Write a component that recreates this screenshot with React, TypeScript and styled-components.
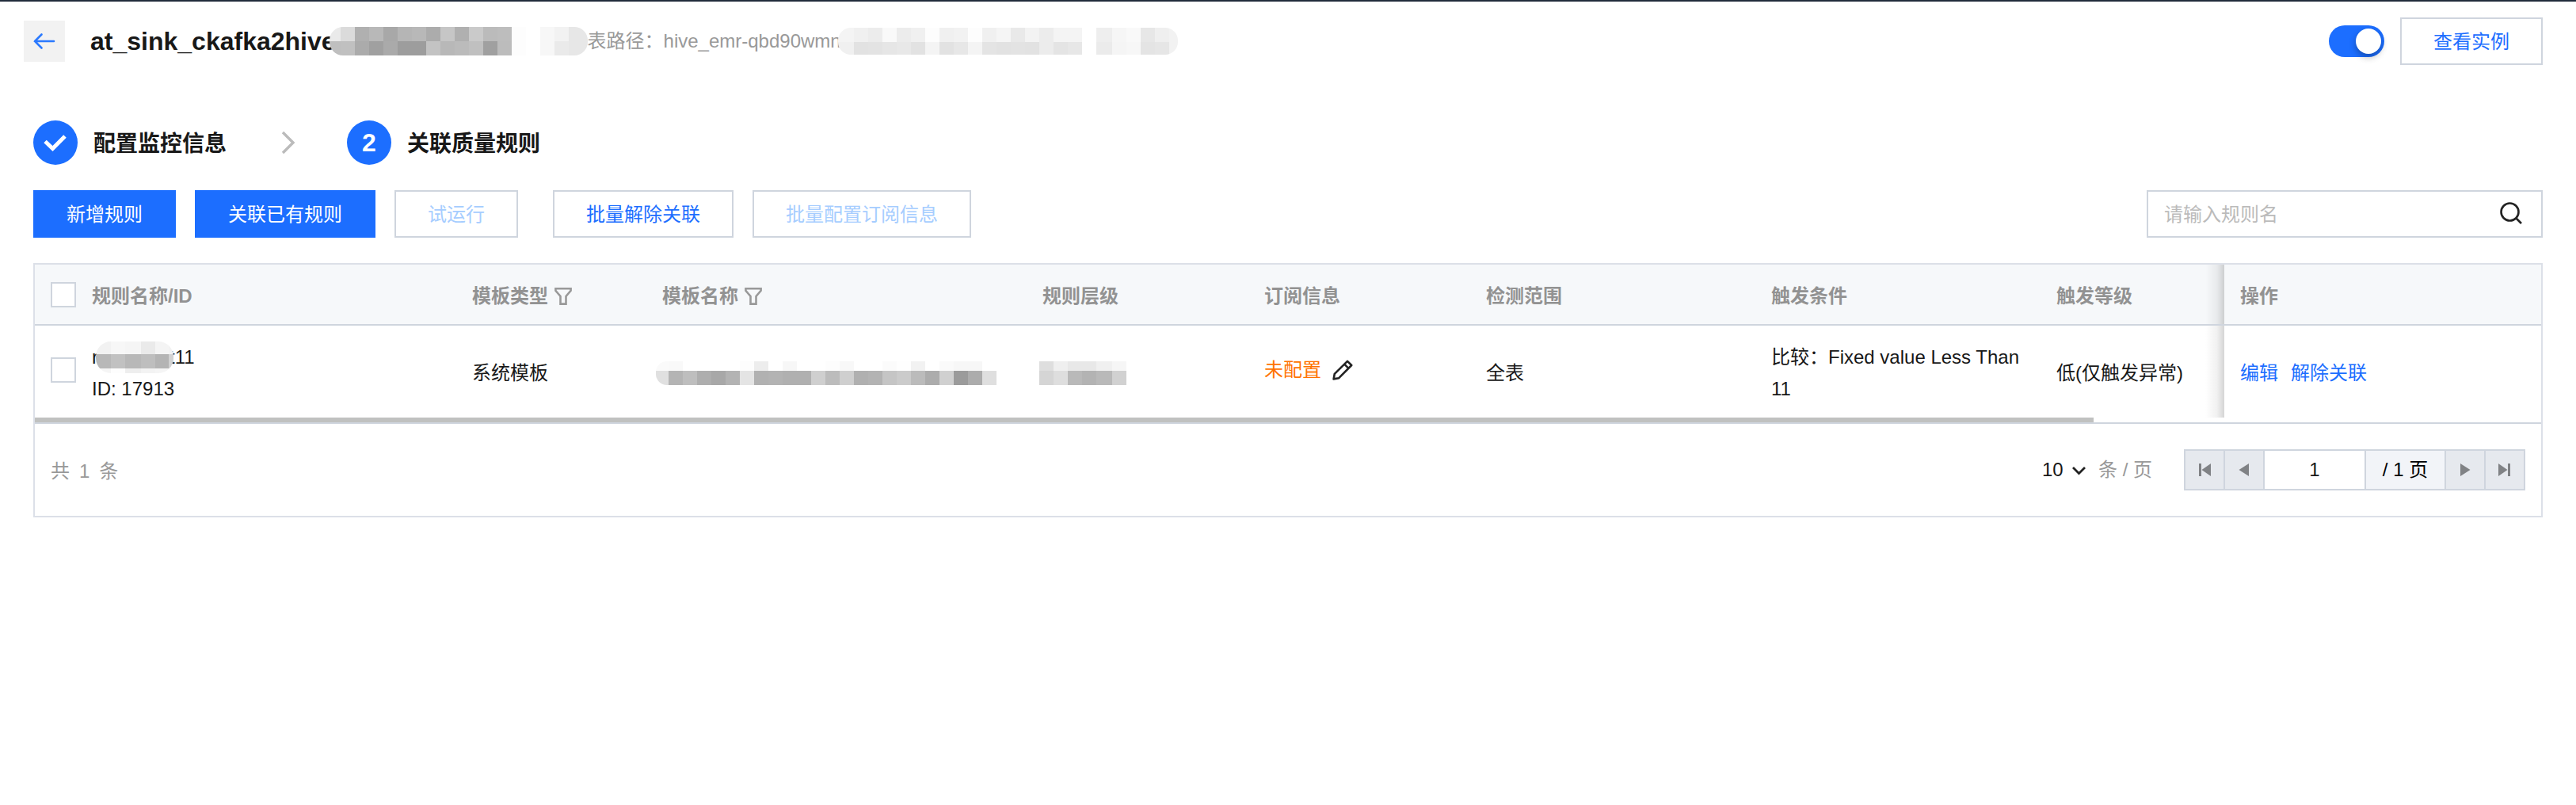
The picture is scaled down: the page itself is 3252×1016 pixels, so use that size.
import React, { useId, useState } from "react";
import styled, { createGlobalStyle, css } from "styled-components";

const color = {
  primary: "#1c6eff",
  primaryFaded: "#a6cdff",
  border: "#cfd5de",
  frame: "#dce0e8",
  text: "#181818",
  muted: "#929292",
  faint: "#999999",
  placeholder: "#bbbbbb",
  headBg: "#f6f8fa",
  warn: "#ff7200",
};

const GlobalStyle = createGlobalStyle`
  *, *::before, *::after { box-sizing: border-box; }
  body {
    margin: 0;
    background: #fff;
    color: ${color.text};
    font: 24px/40px "Liberation Sans", "Noto Sans CJK SC", sans-serif;
  }
  button, input, select { font: inherit; color: inherit; margin: 0; border-radius: 0; }
  svg { display: block; flex: none; }
`;

const Page = styled.main`
  border-top: 2px solid #212b3b;
`;

const TopBar = styled.header`
  display: flex;
  align-items: center;
  padding: 20px 42px 0 30px;
`;

const BackButton = styled.button`
  display: grid;
  place-items: center;
  flex: none;
  width: 52px;
  height: 52px;
  margin-right: 32px;
  padding: 0;
  border: 0;
  background: #f2f2f2;
  cursor: pointer;
`;

const Title = styled.h1`
  display: flex;
  align-items: center;
  margin: 0;
  font-size: 32px;
  font-weight: 700;
`;

const TablePath = styled.p`
  display: flex;
  align-items: center;
  margin: 0;
  color: ${color.faint};
`;

const TopActions = styled.div`
  display: flex;
  align-items: center;
  gap: 20px;
  margin-left: auto;
`;

const Switch = styled.input`
  appearance: none;
  width: 70px;
  height: 40px;
  padding: 4px;
  border-radius: 20px;
  background: ${color.border};
  cursor: pointer;

  &::before {
    content: "";
    display: block;
    width: 32px;
    height: 32px;
    border-radius: 50%;
    background: #fff;
    box-shadow: 0 4px 8px rgba(0, 0, 0, 0.3);
  }
  &:checked { background: ${color.primary}; }
  &:checked::before { margin-left: auto; }
`;

const Button = styled.button<{ $primary?: boolean }>`
  height: 60px;
  padding: 2px 40px 0;
  border: 2px solid ${color.border};
  background: #fff;
  color: ${color.primary};
  white-space: nowrap;
  cursor: pointer;

  ${(p) => p.$primary && css`
    border-color: ${color.primary};
    background: ${color.primary};
    color: #fff;
  `}
  &:disabled { color: ${color.primaryFaded}; cursor: default; }
`;

const Content = styled.section`
  padding: 70px 42px 0;
`;

const Steps = styled.ol`
  display: flex;
  align-items: center;
  gap: 65px;
  margin: 0 0 32px;
  padding: 0;
  list-style: none;
`;

const Step = styled.li`
  display: flex;
  align-items: center;
  gap: 20px;
  font-size: 28px;
  font-weight: 700;
`;

const StepLabel = styled.span`
  padding-top: 4px;
`;

const StepMark = styled.span`
  display: grid;
  place-items: center;
  width: 56px;
  height: 56px;
  border-radius: 50%;
  background: ${color.primary};
  color: #fff;
  font-size: 32px;
`;

const Toolbar = styled.div`
  display: flex;
  align-items: center;
  justify-content: space-between;
  margin-bottom: 32px;
`;

const ButtonGroups = styled.div`
  display: flex;
  gap: 44px;
`;

const ButtonGroup = styled.div`
  display: flex;
  gap: 24px;
`;

const SearchBox = styled.label`
  display: flex;
  align-items: center;
  width: 500px;
  height: 60px;
  padding: 0 22px 0 20px;
  border: 2px solid ${color.border};
`;

const SearchInput = styled.input`
  flex: 1;
  min-width: 0;
  padding: 2px 0 0;
  border: 0;
  outline: 0;
  background: none;
  &::placeholder { color: ${color.placeholder}; }
`;

const Frame = styled.div`
  border: 2px solid ${color.frame};
`;

const Table = styled.table`
  width: 100%;
  table-layout: fixed;
  border-collapse: separate;
  border-spacing: 0;
`;

const Col = styled.col<{ $width?: number }>`
  width: ${(p) => (p.$width ? p.$width + "px" : "auto")};
`;

const edgeShadow = "linear-gradient(to left, rgba(0,0,0,.17), rgba(0,0,0,.06) 9px, transparent 24px)";

const HeadCell = styled.th<{ $edge?: boolean; $tick?: boolean }>`
  height: 77px;
  padding: ${(p) => (p.$tick ? 0 : 4)}px 20px 0;
  border-bottom: 2px solid ${color.border};
  background: ${(p) => (p.$edge ? edgeShadow + ", " : "")}${color.headBg};
  color: ${color.muted};
  text-align: left;
  font-weight: 700;
`;

const Cell = styled.td<{ $edge?: boolean; $raised?: boolean }>`
  height: 115px;
  padding: ${(p) => (p.$raised ? "16px 20px 20px" : "20px 20px 16px")};
  background: ${(p) => (p.$edge ? edgeShadow : "none")};
  vertical-align: middle;
`;

const Checkbox = styled.input`
  appearance: none;
  display: block;
  width: 32px;
  height: 32px;
  border: 2px solid ${color.border};
  background: #fff;
  cursor: pointer;
  &:checked { border-color: ${color.primary}; background: ${color.primary}; }
`;

const Inline = styled.div<{ $gap?: number }>`
  display: flex;
  align-items: center;
  gap: ${(p) => p.$gap ?? 0}px;
`;

const IconButton = styled.button`
  padding: 0;
  border: 0;
  background: none;
  cursor: pointer;
`;

const Unset = styled.span`
  color: ${color.warn};
`;

const Link = styled.a`
  color: ${color.primary};
  text-decoration: none;
`;

const ScrollTrack = styled.div`
  height: 8px;
  border-bottom: 2px solid ${color.border};
`;

const ScrollThumb = styled.div`
  width: 82.15%;
  height: 6px;
  background: #c0c1c0;
`;

const Footer = styled.footer`
  display: flex;
  align-items: center;
  justify-content: space-between;
  padding: 32px 20px;
  color: ${color.faint};
`;

const Total = styled.div`
  display: flex;
  gap: 12px;
  padding-top: 4px;
`;

const SizePicker = styled.label`
  display: flex;
  align-items: center;
  margin-right: 40px;
`;

const SelectWrap = styled.span`
  display: grid;
  align-items: center;
  justify-items: end;
  margin-right: 14px;
  > * { grid-area: 1 / 1; }
  > svg { pointer-events: none; }
`;

const SizeSelect = styled.select`
  appearance: none;
  height: 40px;
  padding: 0 30px 0 0;
  border: 0;
  background: none;
  color: ${color.text};
`;

const Pager = styled.div`
  display: flex;
  > * + * { margin-left: -2px; }
`;

const PagerButton = styled.button`
  display: grid;
  place-items: center;
  width: 52px;
  height: 52px;
  padding: 0;
  border: 2px solid ${color.border};
  background: #e6e9ee;
`;

const PageInput = styled.input`
  width: 130px;
  height: 52px;
  padding: 0;
  border: 2px solid ${color.border};
  background: #fff;
  color: ${color.text};
  text-align: center;
`;

const PageTotal = styled.span`
  min-width: 103px;
  height: 52px;
  padding: 0 20px;
  border: 2px solid ${color.border};
  background: #f2f4f8;
  color: #000;
  line-height: 48px;
  text-align: center;
  white-space: nowrap;
`;

const MosaicBox = styled.span<{ $before?: number; $after?: number }>`
  position: relative;
  display: block;
  flex: none;
  margin-left: ${(p) => -(p.$before ?? 0)}px;
  margin-right: ${(p) => -(p.$after ?? 0)}px;
`;

type MosaicProps = {
  stops: number[];
  rows: { height: number; tones: string }[];
  radiusLeft?: number;
  radiusRight?: number;
  before?: number;
  after?: number;
};

/* Redaction strip: each two-digit hex in `tones` is the grey of one tile. */
function Mosaic({ stops, rows, radiusLeft = 0, radiusRight = 0, before, after }: MosaicProps) {
  const id = useId();
  const width = stops[stops.length - 1];
  const height = rows.reduce((sum, row) => sum + row.height, 0);
  const l = radiusLeft;
  const r = radiusRight;
  let y = 0;
  return (
    <MosaicBox $before={before} $after={after}>
      <svg width={width} height={height} shapeRendering="crispEdges" aria-hidden="true">
        <clipPath id={id}>
          <path
            d={`M${l} 0H${width - r}A${r} ${r} 0 0 1 ${width} ${r}V${height - r}A${r} ${r} 0 0 1 ${width - r} ${height}H${l}A${l} ${l} 0 0 1 0 ${height - l}V${l}A${l} ${l} 0 0 1 ${l} 0Z`}
          />
        </clipPath>
        <g clipPath={`url(#${id})`}>
          {rows.map((row, ri) => {
            const top = y;
            y += row.height;
            return row.tones.split(" ").map((tone, i) => (
              <rect
                key={ri + "-" + i}
                x={stops[i]}
                y={top}
                width={stops[i + 1] - stops[i]}
                height={row.height}
                fill={`#${tone}${tone}${tone}`}
              />
            ));
          })}
        </g>
      </svg>
    </MosaicBox>
  );
}

/* Tile edges: a first tile of its own width, then equal ones, then any listed extras. */
const tiles = (first: number, count: number, extras: number[] = []) => [
  0,
  ...Array.from({ length: count + 1 }, (_, i) => first + i * 18),
  ...extras,
];

const FilterIcon = () => (
  <svg width="22" height="24" viewBox="0 0 22 24" fill="none" stroke="#999" strokeWidth="2.6">
    <path d="M1.4 2.2h19.2v2.6L14.5 12v9.6h-7V12L1.4 4.8z" />
  </svg>
);

const PencilIcon = () => (
  <svg width="26" height="26" viewBox="0 0 26 26" fill="none" stroke="#222" strokeWidth="2.6" strokeLinejoin="round">
    <path d="M1.6 24.4l1.2-6.6L19 1.8l5.2 5.2L8.2 23.2zM15.2 5.6l5.2 5.2" />
  </svg>
);

const pagerShapes = {
  first: "M3 2h3v16H3zM18 2v16L6.500 10z",
  prev: "M16 2v16L3.500 10z",
  next: "M4 2v16l12.500-8z",
  last: "M2 2v16l11.500-8zM14 2h3v16h-3z",
};

function PagerIcon({ shape }: { shape: keyof typeof pagerShapes }) {
  return (
    <svg width="20" height="20" viewBox="0 0 20 20" fill="#808285">
      <path d={pagerShapes[shape]} />
    </svg>
  );
}

export default function App() {
  const [enabled, setEnabled] = useState(true);
  const [page, setPage] = useState("1");

  return (
    <Page>
      <GlobalStyle />
      <TopBar>
        <BackButton aria-label="返回">
          <svg width="28" height="22" viewBox="0 0 28 22" fill="none" stroke="#2b7aff" strokeWidth="2.6" strokeLinecap="round">
            <path d="M2 11h24M10.500 2.500L2 11l8.500 8.500" />
          </svg>
        </BackButton>
        <Title>
          at_sink_ckafka2hive
          <Mosaic
            before={8}
            radiusLeft={17}
            radiusRight={17}
            stops={tiles(14, 16, [326])}
            rows={[
              { height: 18, tones: "ea db b0 b8 a8 b5 b8 ac c6 b0 ca bb bd fd ff f7 f2 e7" },
              { height: 18, tones: "bf c0 ab a0 aa 9d 9d c3 b8 bb c0 a0 bc fd ff f7 ea e7" },
            ]}
          />
        </Title>
        <TablePath>
          表路径：hive_emr-qbd90wmn
          <Mosaic
            before={4}
            radiusLeft={16}
            radiusRight={16}
            stops={tiles(20, 16, [326, 346, 364, 382, 400, 418, 429])}
            rows={[
              { height: 18, tones: "f4 f0 ec f9 ec f0 fd f0 f2 fd f0 f5 e9 f3 ec f4 f4 ff ee f6 f9 e7 ef f2" },
              { height: 16, tones: "f0 e2 e3 e6 e8 e2 f4 e2 e7 f4 e4 e2 e3 e2 ec e4 e7 ff eb f5 f7 e4 e6 f2" },
            ]}
          />
        </TablePath>
        <TopActions>
          <Switch
            type="checkbox"
            role="switch"
            aria-label="启用"
            checked={enabled}
            onChange={(e) => setEnabled(e.target.checked)}
          />
          <Button>查看实例</Button>
        </TopActions>
      </TopBar>

      <Content>
        <Steps>
          <Step>
            <StepMark>
              <svg width="30" height="24" viewBox="0 0 30 24" fill="none" stroke="#fff" strokeWidth="5">
                <path d="M2 10.500l9.500 9L27 4" />
              </svg>
            </StepMark>
            <StepLabel>配置监控信息</StepLabel>
          </Step>
          <li aria-hidden="true">
            <svg width="22" height="30" viewBox="0 0 22 30" fill="none" stroke="#bbb" strokeWidth="3.400">
              <path d="M6 2l13 13L6 28" />
            </svg>
          </li>
          <Step aria-current="step">
            <StepMark>2</StepMark>
            <StepLabel>关联质量规则</StepLabel>
          </Step>
        </Steps>

        <Toolbar>
          <ButtonGroups>
            <ButtonGroup>
              <Button $primary>新增规则</Button>
              <Button $primary>关联已有规则</Button>
              <Button disabled>试运行</Button>
            </ButtonGroup>
            <ButtonGroup>
              <Button>批量解除关联</Button>
              <Button disabled>批量配置订阅信息</Button>
            </ButtonGroup>
          </ButtonGroups>
          <SearchBox>
            <SearchInput type="text" placeholder="请输入规则名" aria-label="请输入规则名" />
            <svg width="30" height="30" viewBox="0 0 30 30" fill="none" stroke="#222" strokeWidth="2.600">
              <circle cx="12.500" cy="12.500" r="11" />
              <path d="M20 20l7 7" />
            </svg>
          </SearchBox>
        </Toolbar>

        <Frame>
          <Table>
            <colgroup>
              <Col $width={52} />
              <Col $width={480} />
              <Col $width={240} />
              <Col $width={480} />
              <Col $width={280} />
              <Col $width={280} />
              <Col $width={360} />
              <Col $width={360} />
              <Col />
              <Col $width={400} />
            </colgroup>
            <thead>
              <tr>
                <HeadCell $tick>
                  <Checkbox type="checkbox" aria-label="全选" />
                </HeadCell>
                <HeadCell>规则名称/ID</HeadCell>
                <HeadCell>
                  <Inline $gap={8}>
                    模板类型
                    <IconButton aria-label="筛选模板类型"><FilterIcon /></IconButton>
                  </Inline>
                </HeadCell>
                <HeadCell>
                  <Inline $gap={8}>
                    模板名称
                    <IconButton aria-label="筛选模板名称"><FilterIcon /></IconButton>
                  </Inline>
                </HeadCell>
                <HeadCell>规则层级</HeadCell>
                <HeadCell>订阅信息</HeadCell>
                <HeadCell>检测范围</HeadCell>
                <HeadCell>触发条件</HeadCell>
                <HeadCell $edge>触发等级</HeadCell>
                <HeadCell>操作</HeadCell>
              </tr>
            </thead>
            <tbody>
              <tr>
                <Cell $raised>
                  <Checkbox type="checkbox" aria-label="选择规则 17913" />
                </Cell>
                <Cell>
                  <Inline>
                    r
                    <Mosaic
                      before={3}
                      after={5}
                      radiusLeft={19}
                      radiusRight={19}
                      stops={[0, 19, 37, 57, 75, 92, 98]}
                      rows={[
                        { height: 16, tones: "f2 f7 f5 ea f4 f2" },
                        { height: 18, tones: "b8 c1 b8 be b4 d2" },
                        { height: 6, tones: "f5 fd ee f3 f5 f5" },
                      ]}
                    />
                    t11
                  </Inline>
                  <div>ID: 17913</div>
                </Cell>
                <Cell>系统模板</Cell>
                <Cell>
                  <Mosaic
                    before={8}
                    radiusLeft={14}
                    stops={tiles(16, 23)}
                    rows={[
                      { height: 12, tones: "fa f9 ff ff ff ff fd ed ff f7 ff ff fd f8 ff ff fb fe f2 ff fa f7 f7 ff" },
                      { height: 18, tones: "e0 b4 be ae a8 b3 e4 b1 b3 b0 b0 cf bc cf b0 b3 c5 cb bb ac d0 9b ac df" },
                    ]}
                  />
                </Cell>
                <Cell>
                  <Mosaic
                    before={4}
                    stops={[0, 18, 36, 54, 72, 92, 110]}
                    rows={[
                      { height: 12, tones: "de ef e8 e8 f0 f6" },
                      { height: 18, tones: "d5 de b9 b3 b9 d1" },
                    ]}
                  />
                </Cell>
                <Cell $raised>
                  <Inline $gap={14}>
                    <Unset>未配置</Unset>
                    <IconButton aria-label="编辑订阅信息"><PencilIcon /></IconButton>
                  </Inline>
                </Cell>
                <Cell>全表</Cell>
                <Cell>比较：Fixed value Less Than 11</Cell>
                <Cell $edge>低(仅触发异常)</Cell>
                <Cell>
                  <Inline $gap={16}>
                    <Link href="#edit">编辑</Link>
                    <Link href="#unlink">解除关联</Link>
                  </Inline>
                </Cell>
              </tr>
            </tbody>
          </Table>
          <ScrollTrack>
            <ScrollThumb />
          </ScrollTrack>

          <Footer>
            <Total>
              <span>共</span>
              <span>1</span>
              <span>条</span>
            </Total>
            <Inline>
              <SizePicker>
                <SelectWrap>
                  <SizeSelect defaultValue="10" aria-label="每页条数">
                    <option value="10">10</option>
                    <option value="20">20</option>
                    <option value="50">50</option>
                  </SizeSelect>
                  <svg width="20" height="14" viewBox="0 0 20 14" fill="none" stroke="#222" strokeWidth="2.800">
                    <path d="M2 4l7.500 7.500L17 4" />
                  </svg>
                </SelectWrap>
                条 / 页
              </SizePicker>
              <Pager>
                <PagerButton disabled aria-label="首页"><PagerIcon shape="first" /></PagerButton>
                <PagerButton disabled aria-label="上一页"><PagerIcon shape="prev" /></PagerButton>
                <PageInput aria-label="页码" value={page} onChange={(e) => setPage(e.target.value)} />
                <PageTotal>/ 1 页</PageTotal>
                <PagerButton disabled aria-label="下一页"><PagerIcon shape="next" /></PagerButton>
                <PagerButton disabled aria-label="末页"><PagerIcon shape="last" /></PagerButton>
              </Pager>
            </Inline>
          </Footer>
        </Frame>
      </Content>
    </Page>
  );
}
